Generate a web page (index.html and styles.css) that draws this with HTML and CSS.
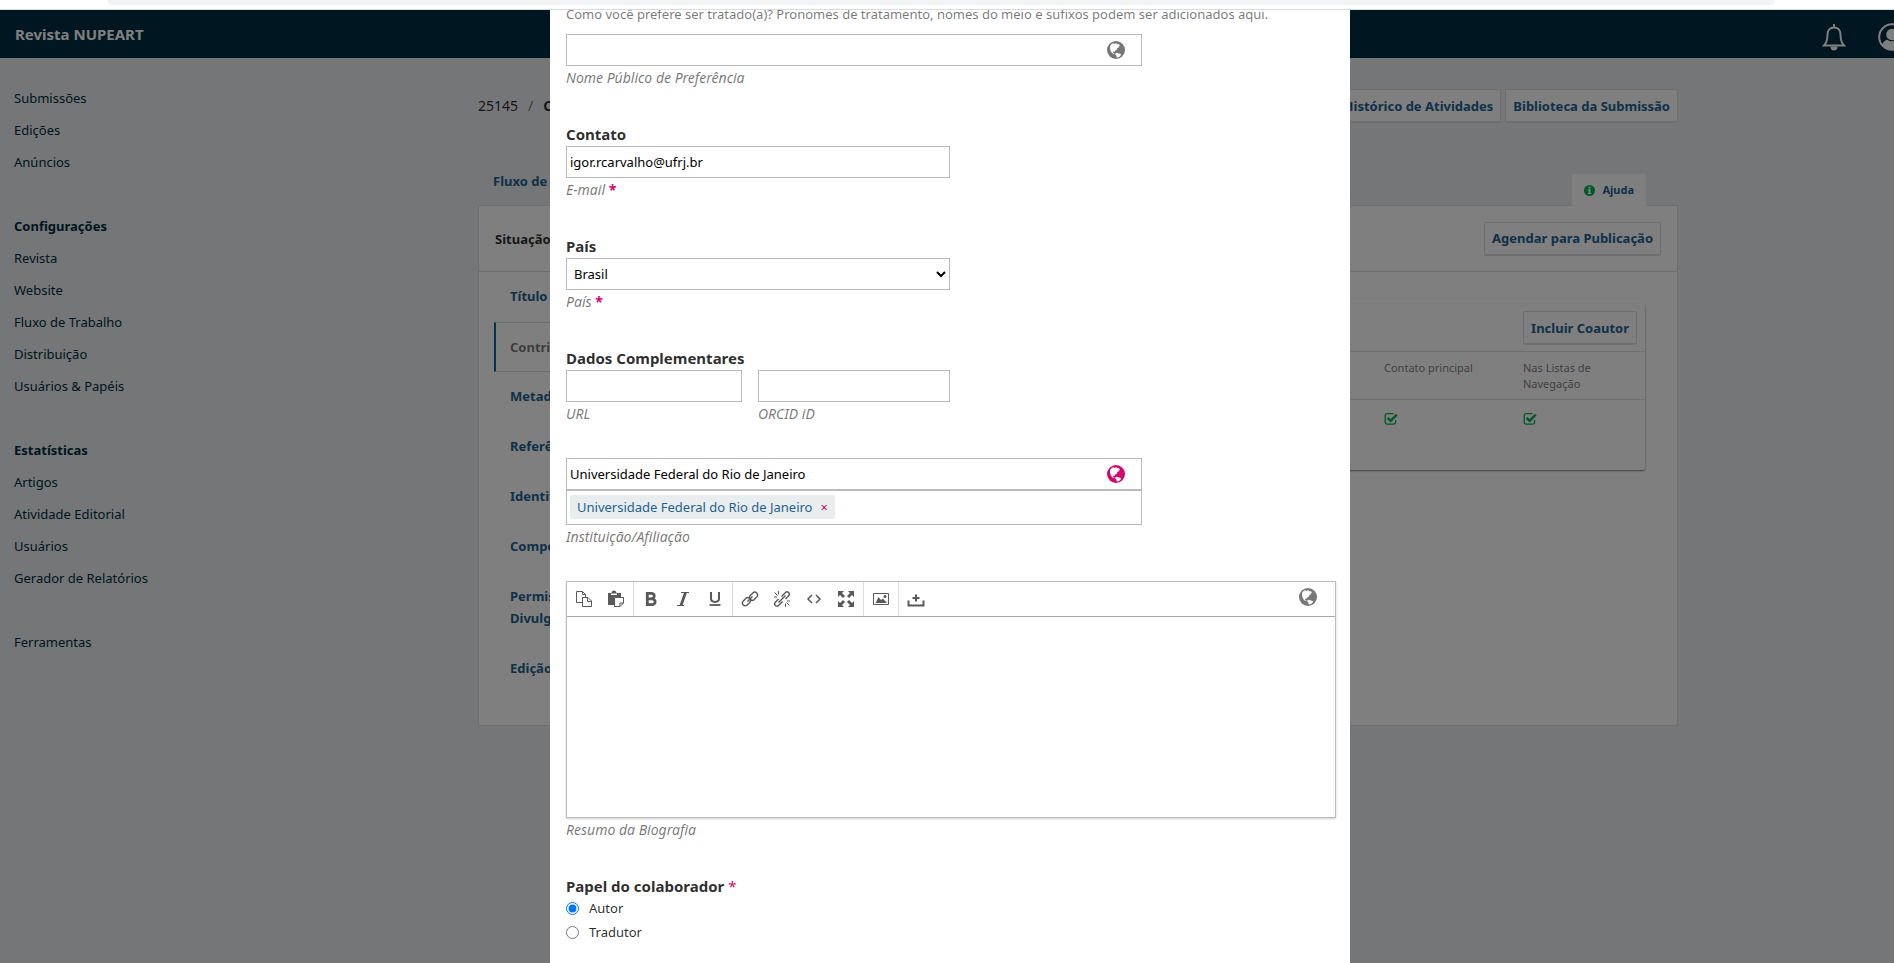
FILE: index.html
```html
<!DOCTYPE html>
<html lang="pt-BR">

<head>
    <meta charset="utf-8" />
    <title>Revista NUPEART</title>
    <link rel="stylesheet" href="styles.css">
</head>

<body>

    <svg class="sprite" aria-hidden="true">
        <symbol id="globe" viewBox="0 0 18 18">
            <circle cx="9" cy="9" r="9" fill="currentColor" />
            <path fill="#fff" d="M3.200 4.600L5 2.800l1.800-.6.600 1 1.200-.9 1.400.1-.4 1 1.600-.3 1.600 1-.5 1.300-1.200.3.700 1-1.600.6-.6 1.600-1.400.6-.6 1.300-1.300-.2-.4 1 1.500.8-.2.900-2.200-1.200-1.300-2.100L3 7z" />
            <path fill="#fff" d="M8.500 12.200l1.500-.5 1.600.7 2.400.6-.5 1.700-1.800 1.500-1.900.4-.3-1.900-1.200-1.200z" />
        </symbol>
        <symbol id="checked" viewBox="0 0 14 14">
            <path fill="none" stroke="currentColor" stroke-width="1.300" d="M9.500 1.700H3A1.800 1.800 0 0 0 1.200 3.500v6.800A1.800 1.800 0 0 0 3 12.100h6.800a1.800 1.800 0 0 0 1.800-1.800V8" />
            <path fill="none" stroke="currentColor" stroke-width="2.400" d="M3.600 5.800l3 3 6.200-6.200" />
        </symbol>
    </svg>

    <div class="tabstrip"><div class="addressbar"></div></div>

    <div class="app">
        <header class="header">
            <a class="brand" href="#">Revista NUPEART</a>
            <div class="header_actions">
                <button class="icon_button" aria-label="Tarefas">
                    <svg width="24" height="28" viewBox="0 0 24 28" fill="none" stroke="#fff" stroke-width="2">
                        <path d="M12 1v3M2 22.500c2-2 3.500-4.500 3.500-11 0-4 2.500-7 6.500-7s6.500 3 6.500 7c0 6.500 1.500 9 3.500 11z" />
                        <path d="M8.500 23.500a3.500 4 0 0 0 7 0z" fill="#fff" stroke="none" />
                    </svg>
                </button>
                <button class="icon_button" aria-label="Conta">
                    <svg width="28" height="28" viewBox="0 0 28 28">
                        <circle cx="14" cy="14" r="12.800" fill="none" stroke="#fff" stroke-width="2" />
                        <circle cx="14" cy="11.500" r="5.800" fill="#fff" />
                        <path fill="#fff" d="M4 22c1-3 3-5 5.500-5.300 2.700 2 6.300 2 9 0C21 17 23 19 24 22c-5 6.500-15 6.500-20 0z" />
                    </svg>
                </button>
            </div>
        </header>

        <div class="body">
            <nav class="sidebar">
                <ul>
                    <li><a href="#">Submissões</a></li>
                    <li><a href="#">Edições</a></li>
                    <li><a href="#">Anúncios</a></li>
                </ul>
                <h2>Configurações</h2>
                <ul>
                    <li><a href="#">Revista</a></li>
                    <li><a href="#">Website</a></li>
                    <li><a href="#">Fluxo de Trabalho</a></li>
                    <li><a href="#">Distribuição</a></li>
                    <li><a href="#">Usuários &amp; Papéis</a></li>
                </ul>
                <h2>Estatísticas</h2>
                <ul>
                    <li><a href="#">Artigos</a></li>
                    <li><a href="#">Atividade Editorial</a></li>
                    <li><a href="#">Usuários</a></li>
                    <li><a href="#">Gerador de Relatórios</a></li>
                </ul>
                <ul>
                    <li><a href="#">Ferramentas</a></li>
                </ul>
            </nav>

            <main class="page">
                <div class="page_head">
                    <div class="crumbs"><span>25145</span><span class="slash">/</span><strong>Carvalho</strong></div>
                    <div class="buttons">
                        <button class="btn">Histórico de Atividades</button>
                        <button class="btn">Biblioteca da Submissão</button>
                    </div>
                </div>

                <div class="tabs">
                    <a class="tab" href="#">Fluxo de Trabalho</a>
                    <a class="help" href="#">
                        <svg width="11" height="11" viewBox="0 0 11 11"><circle cx="5.500" cy="5.500" r="5.500" fill="#00b24e" /><path fill="#fff" d="M4.500 1.800h2v1.600h-2zM3.800 4.300h2.700v3.600h.8V9H3.800V7.900h.8V5.400h-.8z" /></svg>
                        Ajuda
                    </a>
                </div>

                <section class="panel">
                    <div class="panel_head">
                        <strong>Situação: Não agendado</strong>
                        <button class="btn">Agendar para Publicação</button>
                    </div>
                    <div class="panel_body">
                        <nav class="steps">
                            <a href="#">Título &amp; Resumo</a>
                            <a class="current" href="#">Contribuidores</a>
                            <a href="#">Metadados</a>
                            <a href="#">Referências</a>
                            <a href="#">Identificadores</a>
                            <a href="#">Composição Final</a>
                            <a href="#">Permissões &amp; Divulgação</a>
                            <a href="#">Edição</a>
                        </nav>
                        <div class="grid">
                            <div class="grid_head">
                                <button class="btn">Incluir Coautor</button>
                            </div>
                            <table>
                                <thead>
                                    <tr>
                                        <th>Nome</th>
                                        <th class="narrow">Contato principal</th>
                                        <th class="narrow">Nas Listas de Navegação</th>
                                    </tr>
                                </thead>
                                <tbody>
                                    <tr>
                                        <td>Igor Carvalho</td>
                                        <td><svg width="14" height="14"><use href="#checked" /></svg></td>
                                        <td><svg width="14" height="14"><use href="#checked" /></svg></td>
                                    </tr>
                                </tbody>
                            </table>
                        </div>
                    </div>
                </section>
            </main>
        </div>

        <div class="overlay">
            <form class="modal">
                <div class="section">
                    <p class="hint">Como você prefere ser tratado(a)? Pronomes de tratamento, nomes do meio e sufixos podem ser adicionados aqui.</p>
                    <div class="localized wide">
                        <input type="text" id="publicName">
                        <svg class="globe" width="18" height="18"><use href="#globe" /></svg>
                    </div>
                    <label class="sub" for="publicName">Nome Público de Preferência</label>
                </div>

                <div class="section">
                    <h3>Contato</h3>
                    <input class="medium" type="email" id="email" value="igor.rcarvalho@ufrj.br">
                    <label class="sub" for="email">E-mail <span class="req">*</span></label>
                </div>

                <div class="section">
                    <h3>País</h3>
                    <select class="medium" id="country"><option>Brasil</option></select>
                    <label class="sub" for="country">País <span class="req">*</span></label>
                </div>

                <div class="section compact">
                    <h3>Dados Complementares</h3>
                    <div class="pair medium">
                        <div>
                            <input type="text" id="url">
                            <label class="sub" for="url">URL</label>
                        </div>
                        <div>
                            <input type="text" id="orcid">
                            <label class="sub" for="orcid">ORCID iD</label>
                        </div>
                    </div>
                </div>

                <div class="section compact">
                    <div class="localized wide">
                        <input type="text" id="affiliation" value="Universidade Federal do Rio de Janeiro">
                        <svg class="globe filled" width="18" height="18"><use href="#globe" /></svg>
                    </div>
                    <div class="chips wide">
                        <span class="chip">Universidade Federal do Rio de Janeiro <button type="button" aria-label="Remover">×</button></span>
                    </div>
                    <label class="sub" for="affiliation">Instituição/Afiliação</label>
                </div>

                <div class="section">
                    <div class="editor">
                        <div class="toolbar">
                            <div class="group">
                                <button type="button" aria-label="Copiar"><svg viewBox="0 0 18 18" fill="none" stroke="currentColor"><path d="M7.500 12.500h-6v-11h6l3 3v3M7.500 1.500v3h3M7.500 16.500v-9h5.500l3.500 3.500v5.500zM12.500 7.500v4h4" /></svg></button>
                                <button type="button" aria-label="Colar"><svg viewBox="0 0 18 18"><path fill="currentColor" d="M1 3h3.500a2.500 2.500 0 0 1 5 0H14v4H7v8H1z" /><path fill="#fff" d="M4 3.500h6v1.500H4z" /><path fill="none" stroke="currentColor" d="M7.500 7.500h9V13l-3.500 3.500H7.500zM13 16.500V13h3.500" /></svg></button>
                            </div>
                            <div class="group">
                                <button type="button" aria-label="Negrito"><svg viewBox="0 0 18 18"><path fill="none" stroke="currentColor" stroke-width="2.800" d="M5.300 3.300h4.200a2.700 2.700 0 0 1 0 5.500H5.300zM5.300 8.800h4.900a2.900 2.900 0 0 1 0 5.900H5.300z" /></svg></button>
                                <button type="button" aria-label="Itálico"><svg viewBox="0 0 18 18" fill="none" stroke="currentColor"><path d="M7 2.500h8M3 15.500h7" /><path stroke-width="2.800" d="M11.500 2.500L7 15.500" /></svg></button>
                                <button type="button" aria-label="Sublinhado"><svg viewBox="0 0 18 18" fill="none" stroke="currentColor"><path stroke-width="2" d="M5 2v6.500c0 4.500 8 4.500 8 0V2" /><path stroke-width="1.800" d="M3.500 15h11" /></svg></button>
                            </div>
                            <div class="group">
                                <button type="button" aria-label="Link"><svg viewBox="0 0 18 18" fill="none" stroke="currentColor" stroke-width="1.400"><rect x="8" y="3.500" width="9" height="5.500" rx="2.700" transform="rotate(-45 12.500 6.200)" /><rect x="1" y="9" width="9" height="5.500" rx="2.700" transform="rotate(-45 5.500 11.800)" /><path d="M6.500 11.500l5-5" /></svg></button>
                                <button type="button" aria-label="Remover link"><svg viewBox="0 0 18 18" fill="none" stroke="currentColor" stroke-width="1.400"><path d="M8.500 6.500l4-4c2-2 5.200 1.200 3.200 3.200L12.500 9M9.500 11.500l-4 4c-2 2-5.200-1.200-3.200-3.200L5.500 9M8.500 9.500l4-4M5.500 12.500l4-4" /><path stroke-width="1" d="M5.500 1v3.500M1.500 2.500l3 3M1 7h3M12.500 17v-3.500M16.500 15.500l-3-3M17 11h-3" /></svg></button>
                                <button type="button" aria-label="Código"><svg viewBox="0 0 18 18" fill="none" stroke="currentColor" stroke-width="1.500"><path d="M7 5L3 9l4 4M11 5l4 4-4 4" /></svg></button>
                                <button type="button" aria-label="Tela cheia"><svg viewBox="0 0 18 18"><path fill="currentColor" d="M1 1h6L5 3l3 3-2 2-3-3-2 2zM17 1v6l-2-2-3 3-2-2 3-3-2-2zM1 17v-6l2 2 3-3 2 2-3 3 2 2zM17 17h-6l2-2-3-3 2-2 3 3 2-2z" /></svg></button>
                            </div>
                            <div class="group">
                                <button type="button" aria-label="Imagem"><svg viewBox="0 0 18 18"><path fill="none" stroke="currentColor" d="M1.500 3.500h15v11h-15z" /><path fill="currentColor" d="M3.500 13l3-6 2.500 3 2-1.500 4 4.500z" /><circle cx="13" cy="6.500" r="1.500" fill="currentColor" /></svg></button>
                            </div>
                            <div class="group">
                                <button type="button" aria-label="Enviar arquivo"><svg viewBox="0 0 18 18" fill="none" stroke="currentColor" stroke-width="2"><path d="M1.500 10.500v5h15v-5M9 4.500v7M5.500 8h7" /></svg></button>
                            </div>
                            <svg class="globe" width="18" height="18"><use href="#globe" /></svg>
                        </div>
                        <textarea id="biography"></textarea>
                    </div>
                    <label class="sub" for="biography">Resumo da Biografia</label>
                </div>

                <fieldset class="section">
                    <legend>Papel do colaborador <span class="req">*</span></legend>
                    <label class="radio"><input type="radio" name="role" checked> Autor</label>
                    <label class="radio"><input type="radio" name="role"> Tradutor</label>
                </fieldset>
            </form>
        </div>
    </div>
</body>

</html>
```

FILE: styles.css
```css
* {
    box-sizing: border-box;
}

body {
    margin: 0;
    height: 100vh;
    overflow: hidden;
    background: #eaedee;
    color: rgba(0, 0, 0, 0.84);
    font: 13px/20px "Noto Sans", "Open Sans", sans-serif;
}

a {
    color: #1e6292;
    text-decoration: none;
}

button,
input,
select,
textarea {
    font: inherit;
}

h2,
h3,
p,
ul {
    margin: 0;
    padding: 0;
}

.sprite {
    position: absolute;
    width: 0;
    height: 0;
}

/* bottom edge of the browser bar */
.tabstrip {
    position: relative;
    z-index: 10;
    height: 10px;
    padding: 0 119px 0 107px;
    background: #fff;
    border-bottom: 1px solid #dadce0;
}

.addressbar {
    height: 5px;
    background: #f1f3f4;
    border-radius: 0 0 12px 12px;
}

/* the page runs slightly wider than the window */
.app {
    margin-right: -6px;
}

.header {
    display: flex;
    justify-content: space-between;
    align-items: center;
    height: 48px;
    padding: 0 0 0 15px;
    background: #002c40;
}

.brand {
    color: #fff;
    font-size: 15px;
    font-weight: 700;
}

.header_actions {
    display: flex;
    gap: 32px;
    margin-right: -6px;
    padding: 6px 0 0;
}

.icon_button {
    display: flex;
    padding: 0;
    border: 0;
    background: none;
}

.body {
    display: flex;
}

.sidebar {
    flex: 0 0 256px;
    padding: 24px 14px;
    line-height: 32px;
}

.sidebar ul {
    list-style: none;
    margin-bottom: 32px;
}

.sidebar a {
    color: #002c40;
}

.sidebar h2 {
    color: #002c40;
    font-size: 13px;
    font-weight: 700;
}

.page {
    flex: 1;
    max-width: 1200px;
    margin: 0 auto;
    padding-top: 31px;
}

.page_head {
    display: flex;
    justify-content: space-between;
    align-items: center;
    height: 34px;
}

.crumbs {
    display: flex;
    gap: 10px;
    font-size: 14px;
}

.slash {
    color: rgba(0, 0, 0, 0.54);
}

.buttons {
    display: flex;
    gap: 4px;
}

.btn {
    height: 34px;
    padding: 0 7px;
    border: 1px solid #ddd;
    border-bottom-width: 2px;
    border-radius: 2px;
    background: #fff;
    color: #1e6292;
    font-weight: 700;
}

.tabs {
    display: flex;
    justify-content: space-between;
    align-items: flex-end;
    height: 82px;
    padding: 0 32px 0 15px;
    font-weight: 700;
}

.tab {
    padding-bottom: 14px;
}

.help {
    position: relative;
    display: flex;
    align-items: center;
    gap: 7px;
    height: 32px;
    padding: 0 12px;
    margin-bottom: -1px;
    border-radius: 2px 2px 0 0;
    background: #fff;
    font-size: 11px;
}

.panel {
    min-height: 521px;
    border: 1px solid #ddd;
    background: #fff;
}

.panel_head {
    display: flex;
    justify-content: space-between;
    align-items: center;
    height: 66px;
    padding: 0 16px;
    border-bottom: 1px solid #ddd;
}

.panel_body {
    display: flex;
    padding: 0 32px 0 15px;
}

.steps {
    flex: 0 0 160px;
    font-weight: 700;
    line-height: 22px;
}

.steps a {
    display: block;
    padding: 13px 14px 15px 16px;
}

.steps .current {
    padding: 13px 14px;
    border: 1px solid #ddd;
    border-left: 2px solid #006798;
    color: rgba(0, 0, 0, 0.54);
}

.grid {
    flex: 1;
    margin: 32px 0 0 32px;
    height: 166px;
    border-radius: 2px;
    box-shadow: 0 1px 2px rgba(0, 0, 0, 0.5);
}

.grid_head {
    display: flex;
    justify-content: flex-end;
    padding: 7px 8px 6px;
    border-bottom: 1px solid #ddd;
}

.grid table {
    width: 100%;
    border-collapse: collapse;
    table-layout: fixed;
}

.grid th {
    padding: 8px 0 7px;
    border-bottom: 1px solid #ddd;
    color: rgba(0, 0, 0, 0.54);
    font-size: 11px;
    font-weight: 400;
    line-height: 16px;
    text-align: left;
    vertical-align: top;
}

.grid .narrow {
    width: 139px;
    padding-right: 30px;
}

.grid .narrow:last-child {
    width: 122px;
}

.grid td {
    padding: 11px 0;
    color: #00b24e;
}

.overlay {
    position: fixed;
    top: 0;
    left: 0;
    right: -6px;
    bottom: 0;
    overflow: hidden;
    background: rgba(0, 0, 0, 0.5);
}

.modal {
    max-width: 800px;
    min-height: 100%;
    margin: 0 auto;
    padding: 4px 14px 16px 16px;
    background: #fff;
}

.section {
    margin: 0 0 36px;
    padding: 0;
    border: 0;
}

.compact {
    margin-bottom: 34px;
}

.hint {
    margin-bottom: 10px;
    color: rgba(0, 0, 0, 0.54);
}

h3,
legend {
    margin: 0 0 2px;
    padding: 0;
    font-size: 15px;
    font-weight: 700;
    line-height: 20px;
}

input[type="text"],
input[type="email"],
select {
    display: block;
    width: 100%;
    height: 32px;
    padding: 0 3px;
    border: 1px solid #bbb;
    border-radius: 0;
    background: #fff;
    color: #000;
}

.wide {
    max-width: 576px;
}

.modal .medium {
    max-width: 384px;
}

.localized {
    position: relative;
}

.globe {
    color: #777;
}

.localized .globe {
    position: absolute;
    top: 7px;
    right: 17px;
}

.localized .filled {
    color: #d00a6c;
}

.sub {
    display: block;
    padding-top: 2px;
    color: rgba(0, 0, 0, 0.54);
    font-size: 14px;
    font-style: italic;
}

.req {
    color: #d00a6c;
    font-style: normal;
    font-weight: 700;
}

legend .req {
    font-weight: 400;
}

.pair {
    display: grid;
    grid-template-columns: 11fr 12fr;
    gap: 16px;
}

.chips {
    height: 35px;
    padding: 4px 3px;
    border: 1px solid #bbb;
}

.chip {
    display: inline-flex;
    align-items: center;
    gap: 8px;
    height: 24px;
    padding: 0 7px;
    border-radius: 2px;
    background: #eaedee;
    color: #1e6292;
}

.chip button {
    padding: 0;
    border: 0;
    background: none;
    color: #d00a6c;
}

.editor {
    border: 1px solid #bbb;
    box-shadow: 0 1px 2px rgba(0, 0, 0, 0.2);
}

.toolbar {
    display: flex;
    height: 35px;
    padding-right: 18px;
    border-bottom: 1px solid #aaa;
    color: #595959;
}

.group {
    display: flex;
    align-items: center;
    padding: 0 1px;
}

.group + .group {
    border-left: 1px solid #ddd;
}

.group button {
    display: flex;
    justify-content: center;
    align-items: center;
    width: 32px;
    height: 32px;
    padding: 0;
    border: 0;
    background: none;
    color: inherit;
}

.group svg {
    width: 18px;
    height: 18px;
}

.toolbar .globe {
    margin: 6px 0 0 auto;
}

textarea {
    display: block;
    width: 100%;
    height: 200px;
    border: 0;
    resize: none;
}

legend {
    margin-bottom: 0;
}

.radio {
    display: flex;
    align-items: center;
    gap: 10px;
    height: 24px;
}

.radio input {
    width: 13px;
    height: 13px;
    margin: 0;
}
```
